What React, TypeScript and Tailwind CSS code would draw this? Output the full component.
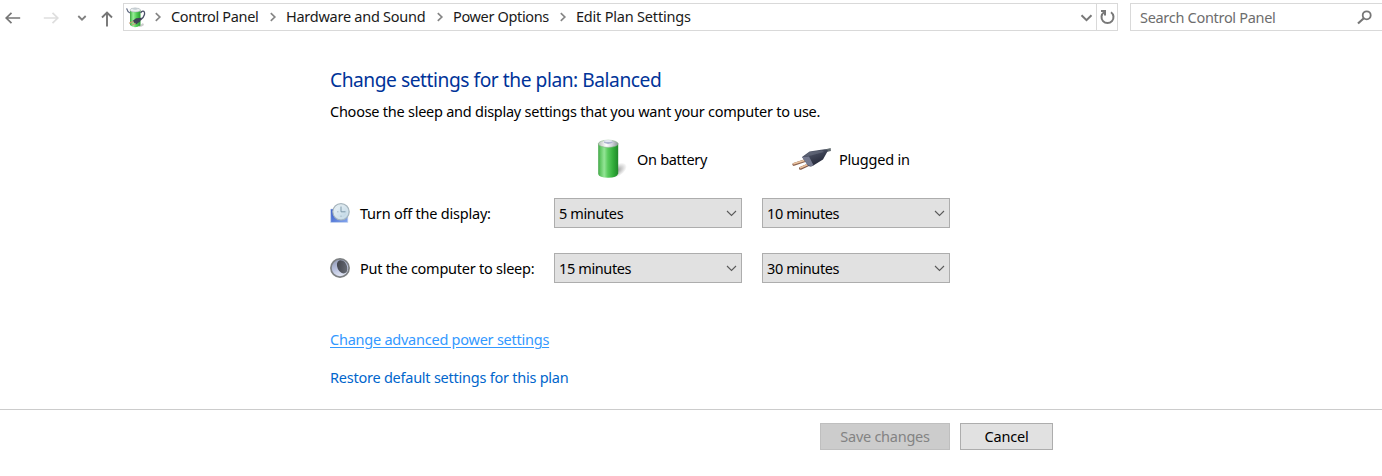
import { clsx } from 'clsx';

interface Crumb {
  label: string;
  className: string;
}

const crumbs: Crumb[] = [
  { label: 'Control Panel', className: 'w-[95px] tracking-[-0.35px]' },
  { label: 'Hardware and Sound', className: 'w-[147px] tracking-[-0.26px]' },
  { label: 'Power Options', className: 'w-[103px] tracking-[-0.35px]' },
  { label: 'Edit Plan Settings', className: 'w-[120px] tracking-[-0.2px]' },
];

function BackIcon({ className }: { className?: string }) {
  return (
    <svg className={clsx('h-4 w-4 shrink-0', className)} viewBox="0 0 16 16" fill="none" stroke="currentColor" strokeWidth="1.7">
      <path d="M15.2 8H1.2M6.5 2.8L1.2 8L6.5 13.2" />
    </svg>
  );
}

function UpIcon() {
  return (
    <svg className="h-4 w-3 shrink-0" viewBox="0 0 12 16" fill="none" stroke="#767676" strokeWidth="1.9">
      <path d="M6 15.5V1.5M1 6.5L6 1.5L11 6.5" />
    </svg>
  );
}

function SmallChevronDown() {
  return (
    <svg className="h-[6px] w-[10px] shrink-0" viewBox="0 0 10 6" fill="none" stroke="#808080" strokeWidth="1.8">
      <path d="M1.3 1L5 4.7L8.7 1" />
    </svg>
  );
}

function CrumbChevron() {
  return (
    <svg className="h-[10px] w-[7px] shrink-0" viewBox="0 0 7 10" fill="none" stroke="#858585" strokeWidth="1.7">
      <path d="M.8 1.2L4.8 5L.8 8.8" />
    </svg>
  );
}

function PowerOptionsIcon() {
  return (
    <svg className="h-[21px] w-5 shrink-0" viewBox="0 0 20 21">
      <defs>
        <linearGradient id="smallBattery">
          <stop offset="0" stopColor="#3aa83f" />
          <stop offset=".3" stopColor="#98ee98" />
          <stop offset=".65" stopColor="#4fcb52" />
          <stop offset="1" stopColor="#2a9a33" />
        </linearGradient>
      </defs>
      <path d="M13 19L17 16L18 18Q16 20 13 20Z" fill="#cccccc" />
      <path d="M4 3V18Q8 22 14.5 18.5V3Z" fill="url(#smallBattery)" />
      <ellipse cx="9.2" cy="3" rx="5.3" ry="2" fill="#e9edee" stroke="#9aa3a8" strokeWidth=".5" />
      <ellipse cx="9.2" cy="1.8" rx="2.4" ry="1" fill="#c5cdd2" />
      <path d="M.6 1.4Q1.4 4.8 4 6" fill="none" stroke="#5f6980" strokeWidth="1.2" />
      <path d="M14.5 13Q17.5 11 18.5 7.5Q19 4 16.8 4.2Q15.4 4.3 14.6 6" fill="none" stroke="#4a5168" strokeWidth="1.3" />
      <path d="M6.5 14L10 11.2L16 10.8L14 14.5L10 17.5Z" fill="#3f4255" />
      <path d="M7.5 14.5L3 16.3M9.5 16.2L6 18" stroke="#c79c78" strokeWidth="1.2" />
    </svg>
  );
}

function BatteryIcon() {
  return (
    <svg className="h-10 w-8 shrink-0" viewBox="0 0 32 40">
      <defs>
        <linearGradient id="batteryBody">
          <stop offset="0" stopColor="#43a548" />
          <stop offset=".12" stopColor="#63c966" />
          <stop offset=".3" stopColor="#94e596" />
          <stop offset=".48" stopColor="#5acb5e" />
          <stop offset=".75" stopColor="#32ad3a" />
          <stop offset="1" stopColor="#1f8829" />
        </linearGradient>
        <linearGradient id="batteryCap">
          <stop offset="0" stopColor="#b6bdb9" />
          <stop offset=".4" stopColor="#ffffff" />
          <stop offset=".7" stopColor="#cfd2da" />
          <stop offset="1" stopColor="#8b9396" />
        </linearGradient>
        <radialGradient id="batteryShadow">
          <stop offset="0" stopColor="#8b8b8b" stopOpacity=".85" />
          <stop offset="1" stopColor="#8b8b8b" stopOpacity="0" />
        </radialGradient>
      </defs>
      <ellipse cx="22" cy="31.5" rx="11" ry="6" fill="url(#batteryShadow)" transform="rotate(-32 22 31.5)" />
      <path d="M3.2 4.5V35Q4 38.8 13 38.8Q22 38.8 23.2 34.5V4.5Z" fill="url(#batteryBody)" />
      <ellipse cx="13.2" cy="4.8" rx="9.9" ry="3.6" fill="url(#batteryCap)" stroke="#86b188" strokeWidth=".6" />
      <path d="M9 3.8V2.2Q13 .5 17.5 2.2V3.8Q13 6 9 3.8Z" fill="#adb4cf" />
      <ellipse cx="13.2" cy="2" rx="4.2" ry="1" fill="#e4e7f0" />
    </svg>
  );
}

function PlugIcon() {
  return (
    <svg className="h-[24px] w-[42px] shrink-0" viewBox="0 0 42 24">
      <defs>
        <linearGradient id="plugBody" x1="0" y1="0" x2=".6" y2="1">
          <stop offset="0" stopColor="#6b7183" />
          <stop offset=".45" stopColor="#414658" />
          <stop offset="1" stopColor="#202435" />
        </linearGradient>
      </defs>
      <path d="M14 13.7L2.8 17.4" stroke="#8e6450" strokeWidth="3" strokeLinecap="round" />
      <path d="M14 13.2L2.8 16.8" stroke="#ebc4a0" strokeWidth="1.6" strokeLinecap="round" />
      <path d="M18 17.5L9.5 21.3" stroke="#815a4c" strokeWidth="3" strokeLinecap="round" />
      <path d="M18 17L9.5 20.7" stroke="#ecc09a" strokeWidth="1.6" strokeLinecap="round" />
      <path d="M31 6Q35 3 39.8 2.6" fill="none" stroke="#626b70" strokeWidth="3" />
      <path d="M11 10L18.5 4.5L30 2.8Q35 1.5 37 3.5L32 12.5L21.5 19Q19 20 17 18.5Z" fill="url(#plugBody)" />
      <path d="M11 10L18 9.5L22.5 18.2L20.5 19.3L16.8 18.3Z" fill="#74798f" />
      <path d="M19 5L31 3.4L33 5L20 8.5L13.5 9.3Z" fill="#666c7c" opacity=".65" />
    </svg>
  );
}

function ClockIcon() {
  return (
    <svg className="h-5 w-5 shrink-0" viewBox="0 0 20 20">
      <defs>
        <linearGradient id="clockScreen" x1="0" y1="0" x2="1" y2="1">
          <stop offset="0" stopColor="#2f55c4" />
          <stop offset="1" stopColor="#86a8ee" />
        </linearGradient>
        <linearGradient id="clockFace" x1="0" y1="0" x2="1" y2="1">
          <stop offset="0" stopColor="#f4f9fb" />
          <stop offset="1" stopColor="#b4cfe0" />
        </linearGradient>
      </defs>
      <path d="M.7 6H17.8V19.5H.7Z" fill="url(#clockScreen)" stroke="#cbd8ee" strokeWidth=".6" />
      <circle cx="11" cy="8.8" r="8.2" fill="url(#clockFace)" stroke="#a7b5bd" strokeWidth="1.2" />
      <circle cx="11" cy="8.8" r="6.4" fill="none" stroke="#d9e6ee" strokeWidth=".8" />
      <path d="M11 3.5V8.8H15.5" fill="none" stroke="#7c98a9" strokeWidth="1" />
      <path d="M7 8.8H8.5M11 12.5V14" stroke="#9bb2c0" strokeWidth=".8" />
    </svg>
  );
}

function MoonIcon() {
  return (
    <svg className="h-5 w-5 shrink-0" viewBox="0 0 20 20">
      <defs>
        <linearGradient id="moonLight" x1=".1" y1="0" x2=".5" y2="1">
          <stop offset="0" stopColor="#8f97b0" />
          <stop offset=".5" stopColor="#b4bddb" />
          <stop offset="1" stopColor="#e4e8f5" />
        </linearGradient>
        <linearGradient id="moonDark" x1="0" y1="0" x2="1" y2="1">
          <stop offset="0" stopColor="#3b3e46" />
          <stop offset="1" stopColor="#6e727b" />
        </linearGradient>
      </defs>
      <circle cx="10" cy="10" r="9.1" fill="url(#moonLight)" stroke="#7d8083" strokeWidth="1.7" />
      <ellipse cx="12.2" cy="8.8" rx="4.8" ry="7" fill="url(#moonDark)" transform="rotate(-26 12.2 8.8)" />
    </svg>
  );
}

function AddressBar() {
  return (
    <div className="flex h-[28px] w-[995px] shrink-0 items-center border border-[#d9d9d9] pl-[2px]">
      <PowerOptionsIcon />
      <div className="ml-[9px] flex flex-1 items-center">
        {crumbs.map((crumb) => (
          <div key={crumb.label} className="flex items-center">
            <CrumbChevron />
            <span className={clsx('mb-[2px] ml-[9px] mr-[4px] whitespace-nowrap text-[#1a1a1a]', crumb.className)}>
              {crumb.label}
            </span>
          </div>
        ))}
      </div>
      <svg className="mr-[3px] mt-[2px] h-[8px] w-[13px]" viewBox="0 0 13 8" fill="none" stroke="#787878" strokeWidth="2">
        <path d="M1.5 1.2L6.5 6.2L11.5 1.2" />
      </svg>
      <div className="flex h-full w-[21px] items-center justify-center border-l border-[#d9d9d9]">
        <svg className="h-4 w-4" viewBox="0 0 16 16" fill="none" stroke="#787878" strokeWidth="2">
          <path d="M12 3.2A6 6 0 1 1 5 3.2" />
          <path d="M2 2H6V6.5" />
        </svg>
      </div>
    </div>
  );
}

function SelectBox({ value }: { value: string }) {
  return (
    <button className="flex h-[30px] w-[188px] items-center justify-between border border-[#adadad] bg-[#e1e1e1] pl-1 pr-[4px] text-left">
      <span className="whitespace-nowrap tracking-[-0.38px]">{value}</span>
      <svg className="h-[7px] w-[11px]" viewBox="0 0 11 7" fill="none" stroke="#5a5a5a" strokeWidth="1.1">
        <path d="M1 1L5.5 5.5L10 1" />
      </svg>
    </button>
  );
}

export default function App() {
  return (
    <div className="h-[476px] w-[1382px] overflow-hidden bg-white font-['Noto_Sans',sans-serif] text-[14.5px] leading-5 text-black">
      <header className="flex h-[34px] items-start pt-[3px]">
        <div className="flex h-[29px] w-[123px] shrink-0 items-center pl-[5px]">
          <BackIcon className="text-[#767676]" />
          <BackIcon className="ml-[22px] rotate-180 text-[#dedede]" />
          <div className="ml-[18px] flex">
            <SmallChevronDown />
          </div>
          <div className="ml-[14px] mt-[2px]">
            <UpIcon />
          </div>
        </div>
        <AddressBar />
        <div className="ml-[12px] flex h-[28px] flex-1 items-center border border-r-0 border-[#d9d9d9] pl-[9px] pr-[10px]">
          <span className="flex-1 whitespace-nowrap tracking-[-0.3px] text-[#6d6d6d]">Search Control Panel</span>
          <svg className="h-[15px] w-[15px]" viewBox="0 0 15 15" fill="none" stroke="#767676">
            <circle cx="9.7" cy="5.3" r="4" strokeWidth="1.8" />
            <path d="M6.8 8.2L1 13.5" strokeWidth="2.2" />
          </svg>
        </div>
      </header>

      <main className="h-[375px] pl-[330px] pt-[32px]">
        <h1 className="whitespace-nowrap text-[19.2px] leading-7 tracking-[-0.46px] text-[#003399]">
          Change settings for the plan: Balanced
        </h1>
        <p className="mt-[7px] whitespace-nowrap tracking-[-0.25px]">
          Choose the sleep and display settings that you want your computer to use.
        </p>

        <div className="mt-[18px] flex h-10 items-center">
          <div className="ml-[265px] flex w-[196px] items-center">
            <BatteryIcon />
            <span className="ml-[10px] tracking-[-0.3px]">On battery</span>
          </div>
          <div className="flex items-center">
            <PlugIcon />
            <span className="ml-[6px] tracking-[-0.2px]">Plugged in</span>
          </div>
        </div>

        <div className="mt-[19px] flex h-[30px] items-center">
          <ClockIcon />
          <span className="ml-[10px] w-[194px] whitespace-nowrap tracking-[-0.22px]">Turn off the display:</span>
          <div className="flex gap-5">
            <SelectBox value="5 minutes" />
            <SelectBox value="10 minutes" />
          </div>
        </div>
        <div className="mt-[25px] flex h-[30px] items-center">
          <MoonIcon />
          <span className="ml-[10px] w-[194px] whitespace-nowrap tracking-[-0.25px]">Put the computer to sleep:</span>
          <div className="flex gap-5">
            <SelectBox value="15 minutes" />
            <SelectBox value="30 minutes" />
          </div>
        </div>

        <div className="mt-[46px] flex flex-col items-start gap-[18px] whitespace-nowrap">
          <a className="tracking-[-0.24px] text-[#3399ff] underline underline-offset-2" href="#advanced">
            Change advanced power settings
          </a>
          <a className="tracking-[-0.24px] text-[#0066cc]" href="#restore">
            Restore default settings for this plan
          </a>
        </div>
      </main>

      <footer className="flex gap-[10px] border-t border-[#cccccc] pl-[820px] pt-[13px]">
        <button className="h-[27px] w-[130px] border border-[#bfbfbf] bg-[#cccccc] pb-[2px] tracking-[-0.26px] text-[#838383]" disabled>
          Save changes
        </button>
        <button className="h-[27px] w-[93px] border border-[#adadad] bg-[#e1e1e1] pb-[2px] tracking-[-0.2px]">Cancel</button>
      </footer>
    </div>
  );
}
